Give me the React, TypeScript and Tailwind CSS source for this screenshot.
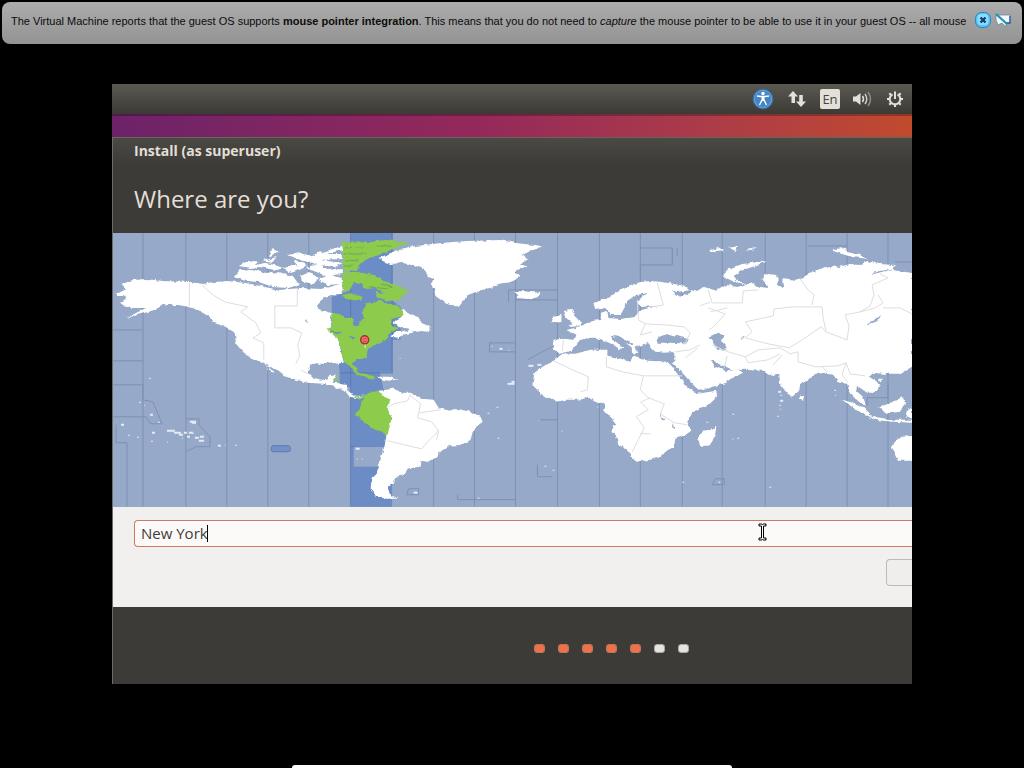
import React from "react";

const zoneLines = [
  142, 185, 226, 267, 308, 433, 474, 515, 557, 599, 640, 682, 722, 765, 806,
  847, 888,
];

const steps = [true, true, true, true, true, false, false];

const islands = [
  [148, 378, 2], [138, 402, 2], [143, 405, 1], [149, 414, 3], [157, 422, 2],
  [120, 424, 3], [127, 435, 2], [136, 437, 2], [151, 432, 3], [150, 441, 2],
  [166, 442, 1], [189, 421, 6], [191, 422, 4], [166, 430, 8], [173, 432, 7],
  [178, 434, 4], [183, 432, 3], [188, 432, 4], [192, 433, 1], [194, 437, 4],
  [199, 436, 4], [198, 440, 5], [186, 436, 3], [181, 438, 1], [217, 445, 3],
  [224, 445, 1], [234, 445, 2], [496, 407, 2], [487, 413, 2], [497, 438, 2],
  [507, 383, 7], [511, 381, 3], [491, 346, 1], [499, 348, 3], [508, 350, 1],
  [528, 365, 5], [537, 364, 4], [538, 420, 1], [561, 431, 1], [597, 407, 1],
  [544, 466, 2], [552, 470, 2], [682, 482, 2], [706, 422, 2], [732, 414, 2],
  [732, 439, 1], [737, 438, 2], [718, 482, 2], [769, 487, 2], [778, 391, 3],
  [780, 395, 2], [780, 400, 3], [779, 405, 2], [780, 409, 1], [777, 416, 2],
  [834, 390, 2], [835, 395, 1], [413, 492, 4], [355, 448, 4], [356, 459, 1],
  [361, 459, 1], [477, 498, 2], [399, 358, 1],
];

const WorldMap = () => (
  <svg
    viewBox="112 233 800 274"
    className="block w-full h-auto bg-[#96a9c8]"
    role="img"
    aria-label="Time zone map"
  >
    <defs>
      <filter id="coast" x="0" y="0" width="100%" height="100%">
        <feTurbulence type="fractalNoise" baseFrequency="0.18" numOctaves="3" seed="4" />
        <feDisplacementMap in="SourceGraphic" scale="4" xChannelSelector="R" yChannelSelector="G" />
      </filter>
    </defs>
    <rect x="112" y="233" width="800" height="274" fill="#96a9c8" />

    {/* zone boundaries */}
    <g stroke="#7d91b3" fill="none">
      {zoneLines.map((x) => (
        <path key={x} d={`M${x} 233V507`} />
      ))}
      <path d="M112 330H142M112 361H142M112 385H142V400L152 402L161 424H150L145 417H112M115 425V443H126V507M185 419H198V425L209 437V447H195L185 452" />
      <path d="M489 343H515M489 352H515M489 343V352M508 302V290H557M515 300H557M640 248H672V265H640V275M672 250V262M677 248V256M537 465V477H552M557 420H538M527 360L555 345" />
      <path d="M808 246H846M457 495V500H515M867 398H888V385M867 398V406M895 262H912M715 479H724V485H712ZM408 489H418V495H406Z" />
    </g>
    <path d="M350.500 233H391.500V300L400 307V340H391.500V372H379L383 390H391.500V507H350.500V388L339 385V372L336 350L331 330V297L350.500 290Z" fill="#6b8cc4" />
    <path d="M350 233V507M391.500 233V374M339 373H391M350 447H382" stroke="#5879b2" fill="none" />
    <rect x="353" y="447" width="31" height="20" fill="#96a9c8" />
    <rect x="270.500" y="446" width="19" height="6" rx="2" fill="#7392c6" stroke="#5a78ad" />

    <g filter="url(#coast)">
      <g fill="#fff">
        {/* north america */}
        <path d="M115 293L124 289L120 284L132 280L145 279L162 281L189 282L202 284L212 282L227 281L245 283L259 286L279 290L299 288L320 289L333 286L342 283V293L332 296L323 298L316 306L320 311L331 313L329 328L337 338L340 349L343 363L336 364L327 362L320 365L311 364L307 373L313 379L320 381L327 378L329 375H335L332 383L345 384L348 392L355 396L364 396L359 399L349 397L344 391L333 387L322 384L307 383L285 377L278 371L265 365L262 361L270 372L275 373L259 362L245 355L235 344L234 333L225 327L214 322L204 314L195 309L179 305L166 305L162 304L153 310L140 314L125 318L135 313L145 308L132 308L124 307L119 302L126 299L124 296L117 296Z" />
        <path d="M233 277L239 270L250 269L264 273L278 272L292 276L298 284L288 288L272 287L258 282L245 281Z" />
        <path d="M238 266L245 262L258 261L254 265L266 263L284 268L275 270L258 267L250 268Z" />
        <path d="M262 261L276 257L271 263ZM283 268L294 264L301 269L290 273ZM286 255L300 253L314 257L309 263L297 259ZM292 260L306 265L300 269ZM300 276L309 272L318 278L312 285L301 281ZM305 267L319 264L328 270L341 268V274L326 276L313 271ZM303 260L318 253L342 246V250L326 254L341 254V259L320 260L342 263L334 267L312 264ZM318 279L330 275L341 278V284L326 285ZM272 248L278 251L268 257Z" />
        {/* newfoundland and maritimes */}
        <path d="M402 308L407 313L417 317L421 323L428 326L430 332L420 331L412 333L402 335L397 338L391 337L394 332H402L409 329L398 327L393 322L401 318Z" />
        {/* greenland */}
        <path d="M378 258L390 253L407 247L425 245L440 243L467 241L500 240L515 243L543 246L533 250L521 255L528 259L520 264L527 267L513 271L519 277L510 282L498 284L489 288L478 291L467 295L462 302L458 307L450 305L443 302L435 296L433 287L430 284L434 279L427 277L425 270L413 265L402 263L390 264L382 261Z" />
        <path d="M512 292L518 291L530 292L540 293L538 297L527 299L517 298L519 295Z" />
        {/* caribbean */}
        <path d="M376 377L388 377L397 380L388 381L379 379Z" />
        {/* south america */}
        <path d="M378 391L393 389L402 393L410 393L420 399L433 400L438 408L448 411L457 409L469 412L480 416L482 422L473 429L470 440L462 445L449 446L441 451L435 458L427 462L420 461L419 467L407 469L404 475L396 477L393 484L387 487L389 494L397 499L386 499L376 497L370 489L371 478L376 473L378 467L381 455L384 446L386 435L383 415Z" />
        {/* eurasia */}
        <path d="M553 340L552 348L558 354L567 352L572 350L578 342L590 338L597 338L604 341L613 345L620 350L623 347L614 341L610 336L617 337L625 342L629 347L634 355L638 353L635 348L642 345L648 342L650 347L655 352L664 353L675 352L675 361L671 364L677 374L684 383L691 387L698 394L712 387L726 383L733 378L743 373L733 367L724 368L715 364L710 361L713 361L722 367L733 371L744 369L761 370L770 376L779 375L780 383L785 392L792 397L799 391L800 385L808 380L817 374L825 373L833 375L839 383L847 384L850 394L859 402L866 406L863 397L856 391L857 386L867 393L874 393L880 388L877 382L869 377L872 373L884 374L900 374L912 367V273L893 270L895 265L879 264L867 261L860 265L850 264L839 267L833 266L813 272L800 278L797 281L782 279L783 288L778 287L777 275L768 274L762 279L769 288L760 287L750 283L737 287L727 285L714 290L703 287L697 291L690 289L690 293L679 297L670 290L677 292L690 290L680 285L662 282L650 281L640 282L623 288L613 294L607 298L593 303L595 310L605 308L610 315L620 315L624 308L628 300L637 295L647 293L637 302L640 307L657 306L641 310L635 317L620 319L607 318L606 311L600 313L602 320L592 321L583 325L574 328L566 330L575 335L573 340L562 339Z" />
        <path d="M563 311L572 310L574 316L581 322L580 326L568 327L572 323L565 318ZM553 317L561 315L561 322L551 323Z" />
        <path d="M722 276L729 269L742 264L766 261L757 266L741 270L734 275L736 280L747 285L732 281Z" />
        <path d="M833 249L846 248L847 252L860 255L868 259L852 257L842 254L833 251ZM709 250L720 248L724 250L711 252ZM728 248L738 246L736 251ZM745 249L757 247L751 250Z" />
        {/* africa */}
        <path d="M562 354L575 354L590 350L607 350L607 356L617 358L629 362L633 357L648 361L667 362L675 370L681 379L688 388L697 394L710 392L718 391L714 400L707 406L700 408L692 413L687 422L691 431L684 436L675 439L674 447L666 451L661 457L650 460L636 462L631 457L627 450L618 445L616 437L611 432L615 423L611 418L603 411L605 403L598 403L590 398L576 400L565 400L557 402L548 398L540 394L532 385L534 373L542 367L552 362Z" />
        <path d="M716 426L715 437L709 446L700 446L697 439L703 431L711 430Z" />
        {/* south east asia, australia */}
        <path d="M842 400L850 402L864 408L872 416L866 416L855 409ZM868 417L880 418L893 420L912 420V423L893 422L873 420ZM879 407L889 404L903 397L905 404L900 412L886 414ZM907 410L912 408V419L906 416ZM878 379L883 379L880 382ZM800 395L804 396L803 400L799 399ZM914 436L903 437L895 441L892 449L898 461L914 461Z" />
      </g>

      {/* selected zone */}
      <g fill="#8ccb4c">
        <path d="M342 243L367 242L385 240L408 243L396 248L390 250L379 255L370 257L360 263L356 271L342 270Z" />
        <path d="M342 272L357 272L373 275L381 280L390 283L400 287L410 291L402 295L400 300L388 301L377 297L374 292L383 294L375 288L364 289L361 283L353 283L349 290L342 291ZM341 295L351 293L362 297L360 301L345 299Z" />
        <path d="M331 313L340 314L344 318H350L354 325L358 325L363 318L362 310L366 303L380 301L390 304L400 307L403 315L392 320L391 326L398 328L390 333L387 338L383 341L374 345L367 350L366 357L356 360L352 364L358 370L355 374L350 367L343 362L341 350L337 340L326 330L331 326Z" />
        <path d="M353 372L365 374L378 378L371 379L358 376ZM332 380L336 376L337 381ZM349 394L357 397L365 396L359 400Z" />
        <path d="M368 393L378 391L382 397L391 400L386 407L391 418L387 435L378 431L370 428L362 421L354 415L359 409L363 397Z" />
      </g>
      <path d="M344 248L362 247M343 254L366 254M345 260L358 261M343 266L352 266M368 287L388 289M381 284L392 288M376 246L392 246" stroke="#6fa55c" strokeWidth="1" />

      {/* inland waters */}
      <g fill="#96a9c8">
        <path d="M658 337L667 334L676 336L690 340L684 344L673 343L657 343Z" />
        <path d="M708 337L716 334L723 335L722 342L727 348L723 351L717 350L713 342Z" />
        <path d="M612 335L618 336L632 344L631 346L624 342Z" />
        <path d="M669 362L675 366L682 373L690 382L698 390L710 388L710 391L697 393L688 387L681 379L674 370Z" />
        <path d="M711 361L718 364L728 368L733 371L724 371L715 367Z" />
        <path d="M304 319L309 323L305 322ZM867 323L875 320L881 315L878 321L868 324ZM872 273L885 270L893 269L874 274ZM741 337L744 338L742 339ZM659 414L664 420L662 421ZM672 423L674 429L672 428Z" />
        <path d="M400 330L409 328L407 332Z" />
        <path d="M329 330L341 332L339 334L329 332ZM348 335L355 337L352 340Z" fill="#6b8cc4" />
      </g>
    </g>

    {/* borders drawn on land */}
    <g fill="none" stroke="#dedddd" strokeWidth="1">
      <path d="M188.500 283V306M201 285L212 295L224 302L247 307L240 312L255 323L260 333L252 338L263 343V360M296.500 288V306H274V328H290L301 333L297 345L299 356L295 364M300 370L307 374" />
      <path d="M386 408L393 404L407 401L410 394M410 396L420 404L417 418L431 422L438 431L428 441L421 449L403 445L387 441M438 431L436 440M419 413L440 410" />
      <path d="M553 361L572 370L588 377L587 390L580 392M606 357V367L622 372L643 376H682M643 376L640 390L648 398L664 404L660 414L674 423L687 425M640 402L648 410L636 417L644 428L638 440L632 452M640 434H650M650 398L641 402" />
      <path d="M637 300L638 320L645 324L640 335M657 283L663 305L650 307M645 324L665 325L684 327L690 333L684 345M640 335L652 332M675 352L690 350L700 345M698 348L685 358M563 340L562 351" />
      <path d="M708 290L712 303H742L743 291L758 290M708 308L725 314L714 326L709 330M745 322L773 316L774 309L792 307L822 307L823 318L826 332M745 322L752 332L745 338L768 344L789 348L802 340L821 327L826 332L847 340L849 326L845 315L860 312L870 306L874 295L872 285L888 278L880 274M860 312L875 308L883 303L878 295M883 308L900 308L912 314" />
      <path d="M712 345L728 352L745 357L758 350L780 348L790 354L798 352V362L816 367L838 366L846 363L850 374L865 376M745 357L748 363L768 360L780 354M800 279L808 290L814 295L812 305M773 365L782 355M727 356L724 368M822 367L828 373M846 363L842 375L848 383M700 306L710 302M710 312L727 308" />
    </g>

    <g fill="#e6ecf6">
      {islands.map(([x, y, w], i) => (
        <rect key={i} x={x} y={y} width={w} height={w > 2 ? 2 : 1} />
      ))}
    </g>

    {/* location pin */}
    <path d="M364.500 344V348" stroke="#e8e8e8" strokeWidth="1" />
    <circle cx="364" cy="340" r="4" fill="#f27272" stroke="#a3352c" strokeWidth="1.500" />
    <path d="M362 339H366M362.500 341.500H365.500" stroke="#c9463f" strokeWidth="1" />
  </svg>
);

const Banner = () => (
  <div className="mx-[2px] mt-[2px] h-[42px] flex items-start justify-between rounded-lg bg-gradient-to-b from-[#acacac] to-[#939393] pl-[9px] pr-[11px] overflow-hidden">
    <p className="min-w-0 overflow-hidden pt-[11px] font-['Liberation_Sans',sans-serif] text-[11px] leading-4 text-[#0c0c0c] whitespace-nowrap">
      The Virtual Machine reports that the guest OS supports{" "}
      <b>mouse pointer integration</b>. This means that you do not need to{" "}
      <i>capture</i> the mouse pointer to be able to use it in your guest OS --
      all mouse
    </p>
    <div className="flex gap-1 pt-[10px] shrink-0">
      <button aria-label="Close">
        <svg width="16" height="16" viewBox="0 0 16 16">
          <rect x="0.500" y="0.500" width="15" height="15" rx="6" fill="#5cc0f2" stroke="#1c87cf" />
          <rect x="2.500" y="2" width="11" height="11" rx="4" fill="#8edcfb" />
          <path d="M5.500 5.500L10.500 10.500M10.500 5.500L5.500 10.500" stroke="#123f78" strokeWidth="2.400" />
        </svg>
      </button>
      <button aria-label="Do not show again">
        <svg width="16" height="16" viewBox="0 0 16 16">
          <path d="M1 3H15V11H11V15L7 11L3 13L1 8Z" fill="#f5f8fa" stroke="#6f8796" strokeWidth="0.800" />
          <path d="M11 11H15V4" fill="none" stroke="#2b5fae" strokeWidth="1.400" />
          <path d="M1 2L12 12" stroke="#1d93b8" strokeWidth="2.200" />
        </svg>
      </button>
    </div>
  </div>
);

const TopPanel = () => (
  <div className="h-[30px] flex items-center justify-end gap-3 pr-2 bg-gradient-to-b from-[#5a5952] to-[#3b3a35]">
    <button aria-label="Accessibility">
      <svg width="22" height="22" viewBox="0 0 22 22" className="block">
        <circle cx="11" cy="11" r="10" fill="#4585c3" stroke="#386a9c" />
        <circle cx="11" cy="11" r="8.500" fill="none" stroke="#6ca3d8" />
        <circle cx="11" cy="5.500" r="1.800" fill="#fff" />
        <path d="M5 8L9 8.500H13L17 8M11 8V13M10 12L7.500 17M12 12L14.500 17" fill="none" stroke="#fff" strokeWidth="1.400" />
        <path d="M9.500 8.500H12.500V13H9.500Z" fill="#fff" />
      </svg>
    </button>
    <button aria-label="Network">
      <svg width="22" height="18" viewBox="0 0 22 18" className="block" fill="#e4e0d9">
        <path d="M7 1L12 6.500H9V13H5.500V6.500H2ZM15 17L20 11.500H16.800V5H13.200V11.500H10Z" />
      </svg>
    </button>
    <button className="w-5 h-5 rounded-xs bg-[#e4e0d9] text-[#45443f] font-['Open_Sans',sans-serif] text-[13px] leading-5">
      En
    </button>
    <button aria-label="Sound">
      <svg width="20" height="18" viewBox="0 0 20 18" className="block" fill="none" strokeWidth="1.500">
        <path d="M1 6.500H4L8.500 3V15L4 11.500H1Z" fill="#e4e0d9" />
        <path d="M10.500 6Q12.500 9 10.500 12" stroke="#e4e0d9" />
        <path d="M13 4Q16.500 9 13 14" stroke="#d0ccc5" />
        <path d="M16 2Q21 9 16 16" stroke="#8e8c86" />
      </svg>
    </button>
    <button aria-label="System menu" className="ml-0.5">
      <svg width="18" height="18" viewBox="0 0 18 18" className="block" fill="none" stroke="#e4e0d9">
        <path d="M6.500 4.300A5.300 5.300 0 1 0 11.500 4.300" strokeWidth="2" />
        <path d="M9 1.500V9" strokeWidth="2" />
        <path d="M3.500 9H1M17 9H14.500M9 14.500V17M5 13L3.300 14.700M13 13L14.700 14.700M4.800 4.800L3.300 3.300M13.200 4.800L14.700 3.300" strokeWidth="2.200" />
      </svg>
    </button>
  </div>
);

const App = () => {
  const [city, setCity] = React.useState("New York");

  return (
    <div className="min-h-screen flex flex-col bg-black overflow-hidden">
      <Banner />

      <main className="mx-28 mt-10 overflow-hidden font-['Open_Sans','Noto_Sans',sans-serif]">
        <TopPanel />
        <div className="h-[23px] border-t-2 border-black/25 bg-gradient-to-r from-[#6d2268] via-[#94285a] via-45% to-[#c14a2c]" />

        <section className="border-l border-[#6d6c68] bg-[#3c3b37]">
          <header className="h-24 border-t border-[#66655e] bg-gradient-to-b from-[#4a4943] to-[#3c3b37] to-30% pl-[21px] text-[#e3dfd7]">
            <p className="pt-[3px] text-sm leading-5 font-bold">
              Install (as superuser)
            </p>
            <h1 id="where" className="pt-[22px] text-2xl leading-8">
              Where are you?
            </h1>
          </header>

          <WorldMap />

          <div className="relative h-[100px] bg-[#f1f0ee] pt-[13px] pl-[21px]">
            <input
              aria-labelledby="where"
              value={city}
              onChange={(e) => setCity(e.target.value)}
              className="block w-full h-[27px] px-[6px] rounded-l-sm border border-r-0 border-[#cf7b60] bg-[#fbfaf9] text-[15px] text-[#3f3e3a] outline-none"
            />
            <span className="absolute left-[94px] top-[18px] h-[17px] w-px bg-black" />
            <svg width="9" height="18" viewBox="0 0 9 18" className="absolute right-[145px] top-[16px]">
              <path d="M1 1H4L4.500 1.500L5 1H8V3H5.500V15H8V17H5L4.500 16.500L4 17H1V15H3.500V3H1Z" fill="#fff" stroke="#000" />
            </svg>
            <div className="flex justify-end pt-3">
              <button
                aria-label="Back"
                className="w-[26px] h-[27px] rounded-l-sm border border-r-0 border-[#bdbbb7] bg-[#efeeed]"
              />
            </div>
          </div>

          <footer className="h-[77px] flex items-center justify-end gap-[13px] pr-[223px] pt-[6px]">
            {steps.map((done, i) => (
              <span
                key={i}
                className={
                  done
                    ? "w-[11px] h-[9px] rounded-[3px] border border-[#b5795f] bg-[#ee7048]"
                    : "w-[11px] h-[9px] rounded-[3px] border border-[#a9a8a4] bg-[#e6e4e0]"
                }
              />
            ))}
          </footer>
        </section>
      </main>

      <div className="mt-auto mx-auto w-[43%] h-[3px] rounded-t-lg bg-white" />
    </div>
  );
};

export default App;
